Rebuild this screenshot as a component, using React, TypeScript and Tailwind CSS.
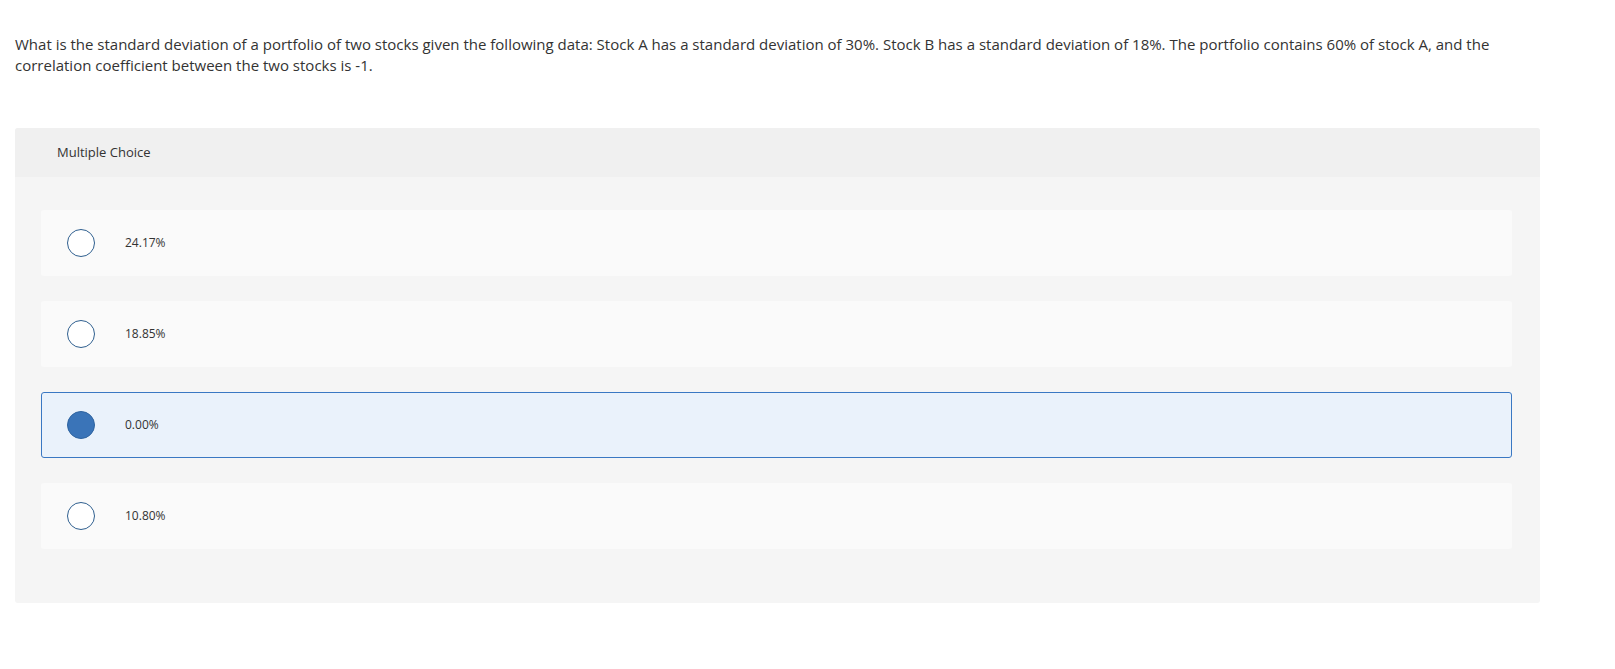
import React from "react";

const options = [
  { label: "24.17%", selected: false },
  { label: "18.85%", selected: false },
  { label: "0.00%", selected: true },
  { label: "10.80%", selected: false },
];

export default function App() {
  return (
    <div className="min-h-[669px] bg-white text-[#333333]" style={{ fontFamily: "'Open Sans', sans-serif" }}>
      <div className="pt-[34px] pl-[15px]">
        <p className="text-[15px] leading-[21px] max-w-[1505px]">
          What is the standard deviation of a portfolio of two stocks given the following data: Stock A has a standard deviation of 30%. Stock B has a standard deviation of 18%. The portfolio contains 60% of stock A, and the correlation coefficient between the two stocks is -1.
        </p>
      </div>
      <div className="ml-[15px] mt-[52px] w-[1525px] rounded-[3px] bg-[#f5f5f5]">
        <div className="flex h-[49px] items-center rounded-t-[3px] bg-[#f0f0f0] pl-[42px] text-[13px]">
          Multiple Choice
        </div>
        <div className="flex flex-col gap-[25px] pl-[26px] pr-[28px] pt-[33px] pb-[54px]">
          {options.map((o) => (
            <div
              key={o.label}
              className={
                o.selected
                  ? "flex h-[66px] items-center rounded-[3px] border border-[#3a78c3] bg-[#eaf2fb] pl-[25px]"
                  : "flex h-[66px] items-center rounded-[3px] border border-transparent bg-[#fafafa] pl-[25px]"
              }
            >
              <span
                className={
                  o.selected
                    ? "h-[28px] w-[28px] rounded-full border border-[#2f64a0] bg-[#3a74b8]"
                    : "h-[28px] w-[28px] rounded-full border-[1.5px] border-[#2f5f8f] bg-white"
                }
              />
              <span className="ml-[30px] text-[12px]">{o.label}</span>
            </div>
          ))}
        </div>
      </div>
    </div>
  );
}
